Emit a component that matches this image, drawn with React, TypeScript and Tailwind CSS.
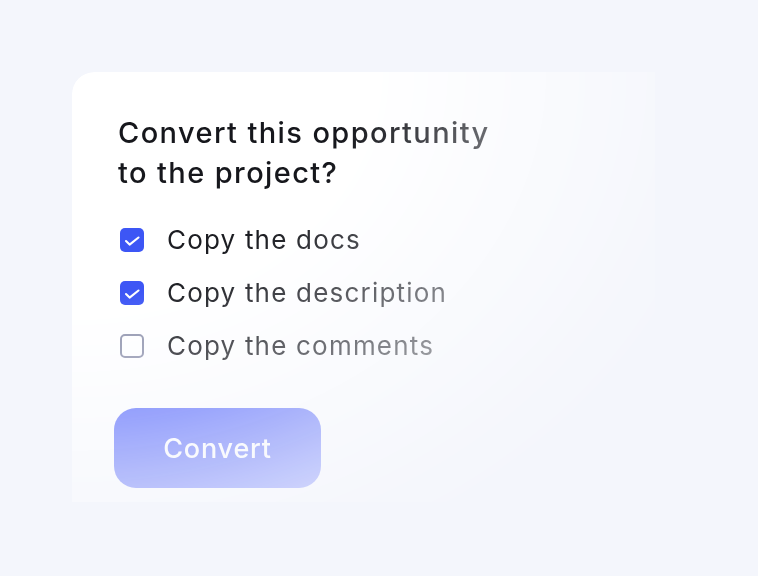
import { useState } from 'react';

const options = [
  { label: 'Copy the docs', checked: true },
  { label: 'Copy the description', checked: true },
  { label: 'Copy the comments', checked: false },
];

function CheckBox({ checked }: { checked: boolean }) {
  if (checked) {
    return (
      <span className="block h-[24px] w-[24px] rounded-[5px] bg-[#3d56f5]">
        <svg viewBox="0 0 24 24" className="h-[24px] w-[24px]" fill="none" stroke="white" strokeWidth={2.1} strokeLinecap="round" strokeLinejoin="round">
          <path d="M6 13l3.6 3.6L18.5 9.5" />
        </svg>
      </span>
    );
  }
  return <span className="block h-[24px] w-[24px] rounded-[5px] border-2 border-[#9094ad] bg-white" />;
}

export default function App() {
  const [items, setItems] = useState(options);

  return (
    <div className="h-[576px] w-[758px] bg-[#f4f6fc] pl-[72px] pt-[72px] font-['Inter','Noto_Sans',sans-serif]">
      <div className="h-[430px] w-[583px] rounded-tl-[22px] bg-white pl-[46px] pt-[41px] [mask-image:radial-gradient(120%_130%_at_0%_0%,black_40%,rgba(0,0,0,0.6)_62%,rgba(0,0,0,0.2)_85%,transparent_100%)]">
        <h2 className="text-[29px] font-medium leading-[40px] tracking-[1.4px] text-[#16171c]">
          Convert this opportunity
          <br />
          to the project?
        </h2>

        <div className="mt-[20px] flex flex-col">
          {items.map((item, i) => (
            <label
              key={item.label}
              className="flex h-[53px] cursor-pointer items-center gap-[23px] pl-[2px]"
              onClick={() =>
                setItems(items.map((it, j) => (j === i ? { ...it, checked: !it.checked } : it)))
              }
            >
              <CheckBox checked={item.checked} />
              <span className="text-[26px] leading-none tracking-[1.2px] text-[#1c1d22]">{item.label}</span>
            </label>
          ))}
        </div>

        <button className="ml-[-4px] mt-[36px] h-[80px] w-[207px] rounded-[22px] bg-[#5b6cfb] pt-[2px] text-[27px] font-medium tracking-[0.8px] text-white">
          Convert
        </button>
      </div>
    </div>
  );
}
